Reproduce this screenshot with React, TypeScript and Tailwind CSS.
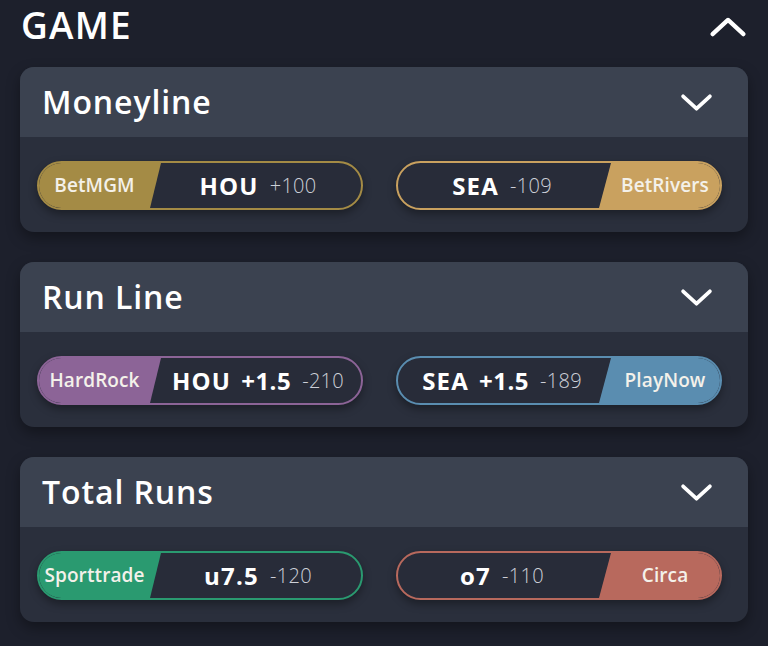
import type { ReactNode } from 'react'

type Line = {
  book: string
  color: string
  team: string
  extra?: string
  odds: string
  side: 'left' | 'right'
}

const markets: { title: string; lines: Line[] }[] = [
  {
    title: 'Moneyline',
    lines: [
      { book: 'BetMGM', color: '#a48b45', team: 'HOU', odds: '+100', side: 'left' },
      { book: 'BetRivers', color: '#c9a15f', team: 'SEA', odds: '-109', side: 'right' },
    ],
  },
  {
    title: 'Run Line',
    lines: [
      { book: 'HardRock', color: '#8c6497', team: 'HOU', extra: '+1.5', odds: '-210', side: 'left' },
      { book: 'PlayNow', color: '#5a8db0', team: 'SEA', extra: '+1.5', odds: '-189', side: 'right' },
    ],
  },
  {
    title: 'Total Runs',
    lines: [
      { book: 'Sporttrade', color: '#2a9a70', team: 'u7.5', odds: '-120', side: 'left' },
      { book: 'Circa', color: '#b8695d', team: 'o7', odds: '-110', side: 'right' },
    ],
  },
]

function Chevron({ up, className }: { up?: boolean; className?: string }) {
  return (
    <svg viewBox="0 0 32 18" className={className} fill="none">
      <polyline
        points={up ? '3,15 16,3 29,15' : '3,3 16,15 29,3'}
        stroke="white"
        strokeWidth="3.6"
        strokeLinecap="round"
        strokeLinejoin="round"
      />
    </svg>
  )
}

function Pill({ line }: { line: Line }) {
  const left = line.side === 'left'
  const label: ReactNode = (
    <div
      className={
        left
          ? 'absolute left-0 top-0 bottom-0 w-[122px] flex items-center justify-center pr-[11px] [clip-path:polygon(0_0,100%_0,calc(100%-11px)_100%,0_100%)]'
          : 'absolute right-0 top-0 bottom-0 w-[121px] flex items-center justify-center pl-[11px] [clip-path:polygon(12px_0,100%_0,100%_100%,0_100%)]'
      }
      style={{ backgroundColor: line.color }}
    >
      <span className="text-[19px] font-semibold text-[#f4f1ea] tracking-[0.1px]">{line.book}</span>
    </div>
  )
  return (
    <div
      className="relative h-[49px] w-[326px] rounded-full border-2 bg-[#282c39] overflow-hidden shadow-[0_4px_8px_rgba(0,0,0,0.35)]"
      style={{ borderColor: line.color }}
    >
      {label}
      <div
        className={
          left
            ? 'absolute top-0 bottom-0 left-[116px] right-0 flex items-center justify-center gap-[11px]'
            : 'absolute top-0 bottom-0 left-0 right-[114px] flex items-center justify-center gap-[11px]'
        }
      >
        <span className="text-[24px] font-bold text-white tracking-[1.2px]">
          {line.team}
          {line.extra && <span className="ml-[10px] tracking-[0.5px]">{line.extra}</span>}
        </span>
        <span className="text-[20px] font-light text-[#cdd0d8] tracking-[0.3px]">{line.odds}</span>
      </div>
    </div>
  )
}

export default function App() {
  return (
    <div className="min-h-screen w-[768px] h-[646px] overflow-hidden bg-[#1d202c] font-['Open_Sans',sans-serif] pl-5">
      <div className="flex items-center justify-between h-[48px] pl-[1px] pr-[21px]">
        <h1 className="text-[37px] font-semibold text-white leading-none tracking-[1.2px]">GAME</h1>
        <Chevron up className="w-[38px] h-[22px] mt-[6px]" />
      </div>
      <div className="flex flex-col gap-[30px] mt-[19px]">
        {markets.map((m) => (
          <section
            key={m.title}
            className="w-[728px] rounded-[14px] overflow-hidden bg-[#2a2f3c] shadow-[0_6px_14px_rgba(0,0,0,0.35)]"
          >
            <div className="h-[70px] bg-[#3b4250] flex items-center justify-between pl-[22px] pr-[35px]">
              <h2 className="text-[32px] font-semibold text-white leading-none tracking-[0.9px]">{m.title}</h2>
              <Chevron className="w-[33px] h-[19px]" />
            </div>
            <div className="h-[95px] flex items-start gap-[33px] pl-[17px] pt-[24px]">
              {m.lines.map((l) => (
                <Pill key={l.book} line={l} />
              ))}
            </div>
          </section>
        ))}
      </div>
    </div>
  )
}
